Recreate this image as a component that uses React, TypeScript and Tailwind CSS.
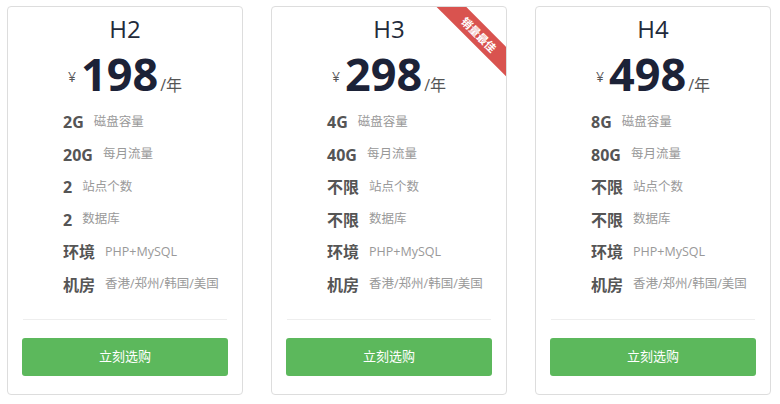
const plans = [
  {
    name: "H2",
    price: "198",
    hot: false,
    rows: [
      ["2G", "磁盘容量"],
      ["20G", "每月流量"],
      ["2", "站点个数"],
      ["2", "数据库"],
      ["环境", "PHP+MySQL"],
      ["机房", "香港/郑州/韩国/美国"],
    ],
  },
  {
    name: "H3",
    price: "298",
    hot: true,
    rows: [
      ["4G", "磁盘容量"],
      ["40G", "每月流量"],
      ["不限", "站点个数"],
      ["不限", "数据库"],
      ["环境", "PHP+MySQL"],
      ["机房", "香港/郑州/韩国/美国"],
    ],
  },
  {
    name: "H4",
    price: "498",
    hot: false,
    rows: [
      ["8G", "磁盘容量"],
      ["80G", "每月流量"],
      ["不限", "站点个数"],
      ["不限", "数据库"],
      ["环境", "PHP+MySQL"],
      ["机房", "香港/郑州/韩国/美国"],
    ],
  },
]

export default function App() {
  return (
    <div
      className="w-[780px] h-[404px] bg-white flex gap-[28px] pl-[7px] pt-[6px]"
      style={{ fontFamily: '"Open Sans", "Noto Sans CJK SC", sans-serif' }}
    >
      {plans.map((p) => (
        <div
          key={p.name}
          className="relative overflow-hidden w-[236px] h-[389px] border border-[#dddddd] rounded-[4px] px-[14px] pt-[10px] flex flex-col"
        >
          {/* ribbon */}
          {p.hot && (
            <div className="absolute top-[17px] -right-[27.5px] w-[110px] h-[21px] rotate-45 bg-[#d9534f] text-white text-[11px] font-bold flex items-center justify-center leading-none">
              销量最佳
            </div>
          )}

          <div className="text-center text-[24px] leading-[24px] text-[#222a3a]">{p.name}</div>

          <div className="mt-[10px] h-[46px] text-center leading-[45px] whitespace-nowrap">
            <span className="text-[14px] text-[#555] align-[9px] mr-[5px]">¥</span>
            <span className="text-[45px] font-bold text-[#1c2237]">{p.price}</span>
            <span className="text-[16px] text-[#555] ml-[2px]">/年</span>
          </div>

          <div className="mt-[9px] pl-[41px] flex flex-col">
            {p.rows.map(([v, l]) => (
              <div key={l} className="h-[32.5px] flex items-center gap-[10px] whitespace-nowrap">
                <span className="text-[16px] font-bold text-[#555]">{v}</span>
                <span className="text-[12.5px] text-[#999]">{l}</span>
              </div>
            ))}
          </div>

          <div className="mt-[18px] h-px bg-[#eeeeee] mx-[1px]" />

          <button className="mt-[18px] h-[38px] w-full rounded-[3px] bg-[#5cb85c] text-white text-[13px]">
            立刻选购
          </button>
        </div>
      ))}
    </div>
  )
}
